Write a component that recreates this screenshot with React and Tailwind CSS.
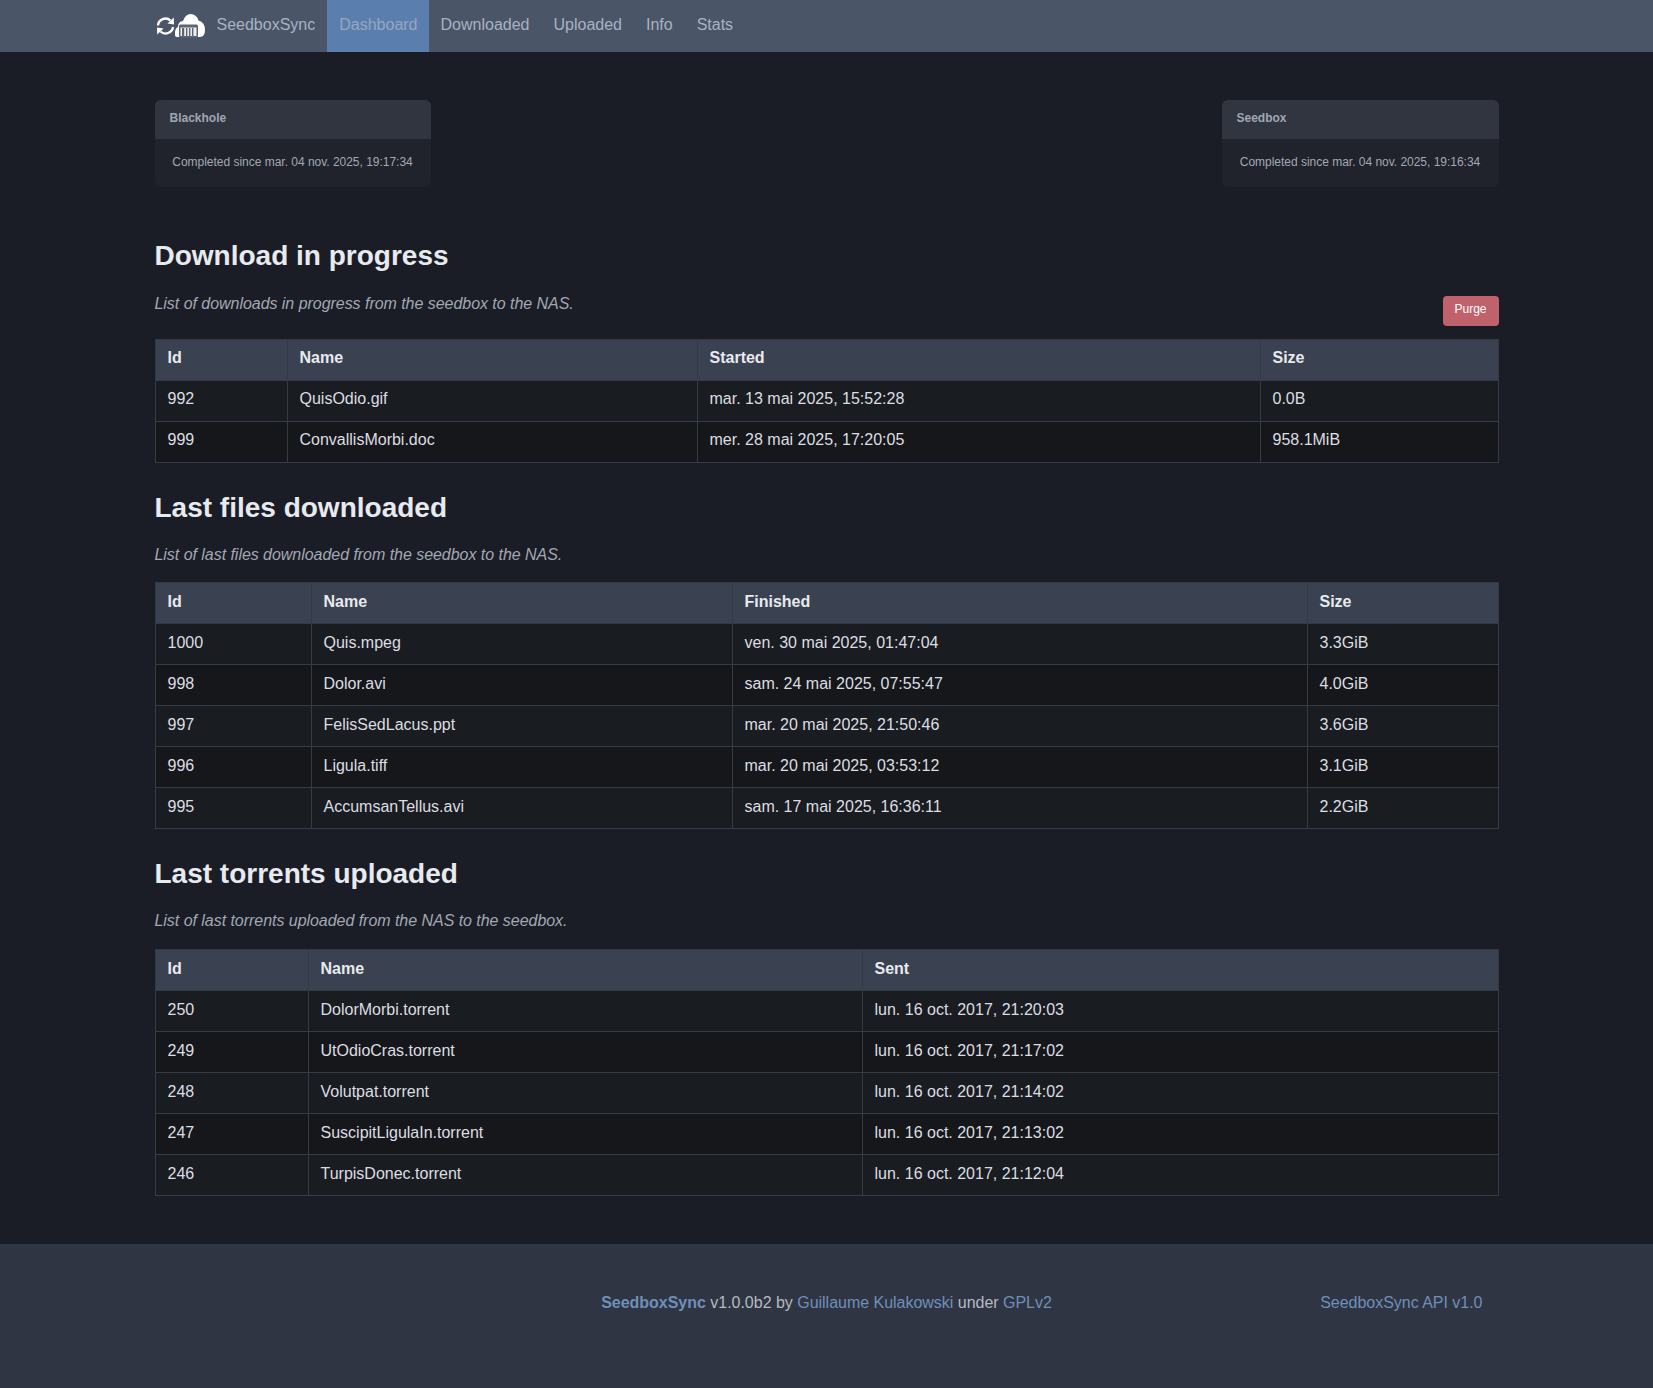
const nav = ["Dashboard", "Downloaded", "Uploaded", "Info", "Stats"];

function Logo() {
  return (
    <svg width="50" height="26" viewBox="0 0 50 26" className="block">
      <g fill="none" stroke="#ffffff" strokeWidth="2.3">
        <path d="M3 12.5 A7.5 7.5 0 0 1 15.5 7.5" />
        <path d="M18 14 A7.5 7.5 0 0 1 5.5 18.5" />
      </g>
      <path d="M18.8 4.5 L19 11.5 L12.5 10.5 Z" fill="#ffffff" />
      <path d="M2.2 21.5 L2 14.5 L8.5 15.5 Z" fill="#ffffff" />
      <path d="M22 24 Q19.5 24 20 20 Q20 15 23 14 Q23 8.5 28 8 Q30.5 1 35.5 1 Q41.5 1 43.5 7.5 Q50 9.5 50 17 Q50 24 45 24 Z" fill="#ffffff" />
      <rect x="24" y="11.5" width="19" height="13" rx="1.5" fill="#5b6576" />
      <rect x="25.5" y="14.5" width="16" height="8.5" fill="#eceef1" />
      <g fill="#5b6576">
        <rect x="27" y="15" width="2.2" height="8" />
        <rect x="31" y="15" width="1.4" height="8" />
        <rect x="34" y="15" width="1.4" height="8" />
        <rect x="37" y="15" width="1.4" height="8" />
      </g>
    </svg>
  );
}

function StatusCard({ title, text, width }) {
  return (
    <div className={`${width} rounded-md overflow-hidden bg-[#20232b]`}>
      <div className="h-[39px] bg-[#31353f] pl-[15px] pb-[3px] flex items-center text-[12px] font-bold text-[#a0a6b4]">
        {title}
      </div>
      <div className="h-[48px] pb-[2px] flex items-center justify-center text-[12px] tracking-[-0.02px] text-[#a3a8b3]">{text}</div>
    </div>
  );
}

function DataTable({ cols, head, rows, cellPad }) {
  return (
    <table className="w-[1343px] table-fixed border-collapse text-[16px] leading-[24px]">
      <colgroup>
        {cols.map((c, i) => (
          <col key={i} style={{ width: c }} />
        ))}
      </colgroup>
      <thead>
        <tr className="bg-[#3a4151]">
          {head.map((h) => (
            <th key={h} className={`h-[41px] px-3 ${cellPad} border border-[#343945] text-left font-bold text-[#e8eaee] align-middle`}>
              {h}
            </th>
          ))}
        </tr>
      </thead>
      <tbody>
        {rows.map((r, i) => (
          <tr key={i} className={i % 2 === 0 ? "bg-[#191c21]" : "bg-[#15171b]"}>
            {r.map((c, j) => (
              <td key={j} className={`h-[41px] px-3 ${cellPad} border border-[#363b47] text-[#dcdee2] align-middle`}>
                {c}
              </td>
            ))}
          </tr>
        ))}
      </tbody>
    </table>
  );
}

export default function App() {
  return (
    <div className="min-h-[1388px] bg-[#1a1d26] font-['Liberation_Sans',Arial,sans-serif] [text-rendering:optimizeLegibility] antialiased text-[#dcdee2] flex flex-col">
      <nav className="h-[52px] bg-[#4a5568]">
        <div className="w-[1344px] mx-auto flex h-full items-center">
          <div className="w-[50px] mr-[12px] flex items-center"><Logo /></div>
          <span className="pr-3 pb-[2px] text-[#a9b2c2]">SeedboxSync</span>
          {nav.map((n, i) => (
            <a
              key={n}
              className={`h-full pl-3 pb-[2px] flex items-center ${i === 0 ? "pr-[11px] bg-[#5a7fae] text-[#97a6bf]" : "pr-3 text-[#a9b2c2]"}`}
            >
              {n}
            </a>
          ))}
        </div>
      </nav>

      <main className="w-[1344px] mx-auto flex-1">
        <div className="mt-[48px] flex justify-between">
          <StatusCard width="w-[276px]" title="Blackhole" text="Completed since mar. 04 nov. 2025, 19:17:34" />
          <StatusCard width="w-[277px]" title="Seedbox" text="Completed since mar. 04 nov. 2025, 19:16:34" />
        </div>

        <h1 className="mt-[51px] text-[28px] leading-[36px] font-bold text-[#e8eaee]">Download in progress</h1>
        <div className="mt-[20px] h-[45px] flex justify-between items-start">
          <p className="italic text-[#a3a8b3] leading-[24px] mt-[-2px] tracking-[-0.04px]">List of downloads in progress from the seedbox to the NAS.</p>
          <button className="mt-[2px] w-[56px] h-[30px] rounded bg-[#c0626b] text-white text-[12px] pb-[5px]">Purge</button>
        </div>
        <DataTable
          cellPad="pb-[5px]"
          cols={["132px", "410px", "563px", "238px"]}
          head={["Id", "Name", "Started", "Size"]}
          rows={[
            ["992", "QuisOdio.gif", "mar. 13 mai 2025, 15:52:28", "0.0B"],
            ["999", "ConvallisMorbi.doc", "mer. 28 mai 2025, 17:20:05", "958.1MiB"],
          ]}
        />

        <h1 className="mt-[27px] text-[28px] leading-[36px] font-bold text-[#e8eaee]">Last files downloaded</h1>
        <p className="mt-[17px] italic text-[#a3a8b3] leading-[24px] tracking-[-0.04px]">List of last files downloaded from the seedbox to the NAS.</p>
        <div className="mt-[15px]">
          <DataTable
            cellPad="pb-[3px]"
            cols={["156px", "421px", "575px", "191px"]}
            head={["Id", "Name", "Finished", "Size"]}
            rows={[
              ["1000", "Quis.mpeg", "ven. 30 mai 2025, 01:47:04", "3.3GiB"],
              ["998", "Dolor.avi", "sam. 24 mai 2025, 07:55:47", "4.0GiB"],
              ["997", "FelisSedLacus.ppt", "mar. 20 mai 2025, 21:50:46", "3.6GiB"],
              ["996", "Ligula.tiff", "mar. 20 mai 2025, 03:53:12", "3.1GiB"],
              ["995", "AccumsanTellus.avi", "sam. 17 mai 2025, 16:36:11", "2.2GiB"],
            ]}
          />
        </div>

        <h1 className="mt-[27px] text-[28px] leading-[36px] font-bold text-[#e8eaee]">Last torrents uploaded</h1>
        <p className="mt-[17px] italic text-[#a3a8b3] leading-[24px] tracking-[-0.04px]">List of last torrents uploaded from the NAS to the seedbox.</p>
        <div className="mt-[16px]">
          <DataTable
            cellPad="pb-[3px]"
            cols={["153px", "554px", "636px"]}
            head={["Id", "Name", "Sent"]}
            rows={[
              ["250", "DolorMorbi.torrent", "lun. 16 oct. 2017, 21:20:03"],
              ["249", "UtOdioCras.torrent", "lun. 16 oct. 2017, 21:17:02"],
              ["248", "Volutpat.torrent", "lun. 16 oct. 2017, 21:14:02"],
              ["247", "SuscipitLigulaIn.torrent", "lun. 16 oct. 2017, 21:13:02"],
              ["246", "TurpisDonec.torrent", "lun. 16 oct. 2017, 21:12:04"],
            ]}
          />
        </div>
      </main>

      <footer className="h-[144px] bg-[#2f3542]">
        <div className="w-[1344px] mx-auto grid grid-cols-[1fr_auto_1fr] pt-[47px] leading-[24px] tracking-[-0.02px] text-[#b5bac4]">
          <div />
          <div>
            <a className="font-bold text-[#6f8fbb]">SeedboxSync</a> v1.0.0b2 by{" "}
            <a className="text-[#6f8fbb]">Guillaume Kulakowski</a> under <a className="text-[#6f8fbb]">GPLv2</a>
          </div>
          <div className="text-right pr-[16px]">
            <a className="text-[#6f8fbb]">SeedboxSync API v1.0</a>
          </div>
        </div>
      </footer>
    </div>
  );
}
